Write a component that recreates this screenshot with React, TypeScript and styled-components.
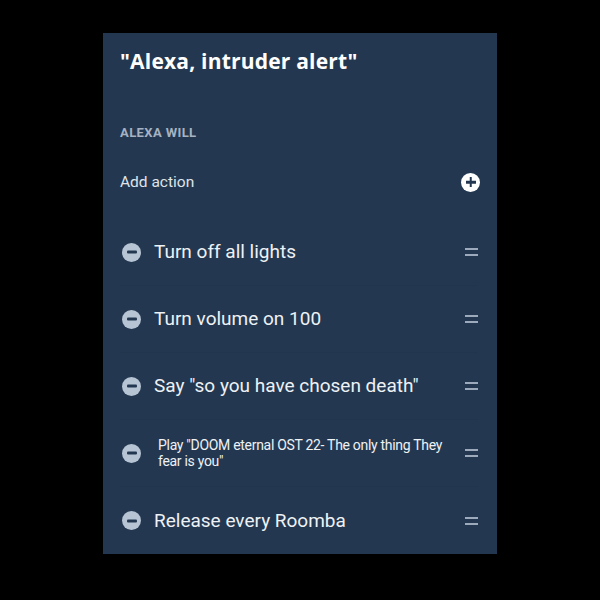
import React from 'react';
import styled, { createGlobalStyle } from 'styled-components';

const GlobalStyle = createGlobalStyle`
  html, body {
    margin: 0;
    padding: 0;
    background: #000;
    -webkit-font-smoothing: antialiased;
    font-family: Roboto, "Liberation Sans", sans-serif;
  }
`;

const colors = {
  panel: '#233850',
  text: '#eef1f5',
  muted: '#a6b2c2',
  minus: '#b7c4d4',
  handle: '#9caabb',
};

const Page = styled.div`
  width: 600px;
  height: 600px;
  padding-top: 33px;
  box-sizing: border-box;
`;

const Panel = styled.div`
  width: 394px;
  height: 521px;
  margin: 0 auto;
  background: ${colors.panel};
  padding: 14px 19px 0 17px;
  box-sizing: border-box;
  display: flex;
  flex-direction: column;
  overflow: hidden;
`;

const Title = styled.h1`
  margin: 0;
  font-family: "Open Sans", Roboto, sans-serif;
  font-size: 21px;
  line-height: 28px;
  font-weight: 700;
  color: #fff;
  letter-spacing: 0.2px;
`;

const SectionLabel = styled.div`
  margin-top: 50px;
  font-size: 13px;
  line-height: 16px;
  font-weight: 700;
  color: ${colors.muted};
  letter-spacing: 0.4px;
`;

const AddRow = styled.div`
  margin-top: 29px;
  height: 24px;
  display: flex;
  align-items: center;
  justify-content: space-between;
  font-size: 15.5px;
  color: #dfe4ea;
`;

const PlusButton = styled.span`
  width: 19px;
  height: 19px;
  margin-right: -2px;
  border-radius: 50%;
  background: #fff;
  position: relative;
  &::before,
  &::after {
    content: '';
    position: absolute;
    left: 50%;
    top: 50%;
    background: ${colors.panel};
    transform: translate(-50%, -50%);
  }
  &::before { width: 10px; height: 2.5px; }
  &::after { width: 2.5px; height: 10px; }
`;

const List = styled.div`
  margin-top: 25px;
  display: flex;
  flex-direction: column;
`;

const Row = styled.div`
  height: 67px;
  display: flex;
  align-items: center;
  gap: 13px;
  padding-left: 2px;
  border-bottom: 1px solid rgba(0, 0, 0, 0.04);
  box-sizing: border-box;
  &:last-child { border-bottom: none; }
`;

const MinusButton = styled.span`
  flex: none;
  width: 19px;
  height: 19px;
  border-radius: 50%;
  background: ${colors.minus};
  position: relative;
  &::after {
    content: '';
    position: absolute;
    left: 50%;
    top: 50%;
    width: 10px;
    height: 3px;
    border-radius: 1px;
    background: ${colors.panel};
    transform: translate(-50%, -50%);
  }
`;

const ActionText = styled.div<{ small?: boolean }>`
  flex: 1;
  color: ${colors.text};
  font-size: ${(p) => (p.small ? '14px' : '19px')};
  line-height: ${(p) => (p.small ? '16px' : '22px')};
  letter-spacing: ${(p) => (p.small ? '-0.3px' : '0')};
  padding-left: ${(p) => (p.small ? '4px' : '0')};
`;

const Handle = styled.span`
  flex: none;
  width: 13px;
  height: 8px;
  border-top: 2px solid ${colors.handle};
  border-bottom: 2px solid ${colors.handle};
  box-sizing: border-box;
`;

const actions = [
  { text: 'Turn off all lights' },
  { text: 'Turn volume on 100' },
  { text: 'Say "so you have chosen death"' },
  { text: 'Play "DOOM eternal OST 22- The only thing They fear is you"', small: true },
  { text: 'Release every Roomba' },
];

export default function App() {
  return (
    <>
      <GlobalStyle />
      <Page>
        <Panel>
          <Title>"Alexa, intruder alert"</Title>
          <SectionLabel>ALEXA WILL</SectionLabel>
          <AddRow>
            <span>Add action</span>
            <PlusButton />
          </AddRow>
          <List>
            {actions.map((a) => (
              <Row key={a.text}>
                <MinusButton />
                <ActionText small={a.small}>{a.text}</ActionText>
                <Handle />
              </Row>
            ))}
          </List>
        </Panel>
      </Page>
    </>
  );
}
